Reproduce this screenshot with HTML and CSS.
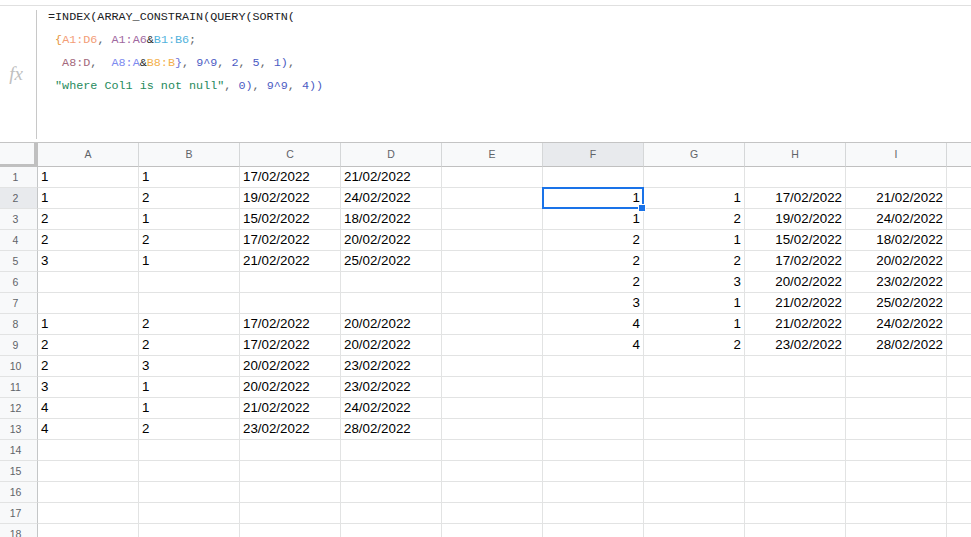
FILE: index.html
```html
<!DOCTYPE html>
<html lang="en">
<head>
    <meta charset="UTF-8">
    <title>Sheet</title>
    <link rel="stylesheet" href="styles.css">
</head>
<body>

    <div class="formula-bar">
        <div class="fx">fx</div>
        <div class="divider"></div>
        <div class="formula">
            <div class="line">=INDEX(ARRAY_CONSTRAIN(QUERY(SORTN(</div>
            <div class="line"> <span class="br1">{</span><span class="r1">A1:D6</span><span class="p">, </span><span class="r2">A1:A6</span>&amp;<span class="r3">B1:B6</span><span class="p">;</span></div>
            <div class="line">  <span class="r4">A8:D</span><span class="p">,  </span><span class="r5">A8:A</span>&amp;<span class="r6">B8:B</span><span class="br2">}</span><span class="p">, </span><span class="num">9^9</span><span class="p">, </span><span class="num">2</span><span class="p">, </span><span class="num">5</span><span class="p">, </span><span class="num">1)</span><span class="p">,</span></div>
            <div class="line"> <span class="str">"where Col1 is not null"</span><span class="p">, </span><span class="num">0)</span><span class="p">, </span><span class="num">9^9</span><span class="p">, </span><span class="num">4))</span></div>
        </div>
    </div>

    <div class="sheet">
        <div class="row head">
            <div class="corner"></div>
            <div class="ch">A</div><div class="ch">B</div><div class="ch">C</div><div class="ch">D</div><div class="ch">E</div>
            <div class="ch active">F</div><div class="ch">G</div><div class="ch">H</div><div class="ch">I</div><div class="ch"></div>
        </div>

        <div class="row">
            <div class="rh">1</div>
            <div class="c">1</div><div class="c">1</div><div class="c">17/02/2022</div><div class="c">21/02/2022</div><div class="c"></div>
            <div class="c"></div><div class="c"></div><div class="c"></div><div class="c"></div><div class="c"></div>
        </div>
        <div class="row">
            <div class="rh active">2</div>
            <div class="c">1</div><div class="c">2</div><div class="c">19/02/2022</div><div class="c">24/02/2022</div><div class="c"></div>
            <div class="c n sel">1<span class="handle"></span></div><div class="c n">1</div><div class="c n">17/02/2022</div><div class="c n">21/02/2022</div><div class="c"></div>
        </div>
        <div class="row">
            <div class="rh">3</div>
            <div class="c">2</div><div class="c">1</div><div class="c">15/02/2022</div><div class="c">18/02/2022</div><div class="c"></div>
            <div class="c n">1</div><div class="c n">2</div><div class="c n">19/02/2022</div><div class="c n">24/02/2022</div><div class="c"></div>
        </div>
        <div class="row">
            <div class="rh">4</div>
            <div class="c">2</div><div class="c">2</div><div class="c">17/02/2022</div><div class="c">20/02/2022</div><div class="c"></div>
            <div class="c n">2</div><div class="c n">1</div><div class="c n">15/02/2022</div><div class="c n">18/02/2022</div><div class="c"></div>
        </div>
        <div class="row">
            <div class="rh">5</div>
            <div class="c">3</div><div class="c">1</div><div class="c">21/02/2022</div><div class="c">25/02/2022</div><div class="c"></div>
            <div class="c n">2</div><div class="c n">2</div><div class="c n">17/02/2022</div><div class="c n">20/02/2022</div><div class="c"></div>
        </div>
        <div class="row">
            <div class="rh">6</div>
            <div class="c"></div><div class="c"></div><div class="c"></div><div class="c"></div><div class="c"></div>
            <div class="c n">2</div><div class="c n">3</div><div class="c n">20/02/2022</div><div class="c n">23/02/2022</div><div class="c"></div>
        </div>
        <div class="row">
            <div class="rh">7</div>
            <div class="c"></div><div class="c"></div><div class="c"></div><div class="c"></div><div class="c"></div>
            <div class="c n">3</div><div class="c n">1</div><div class="c n">21/02/2022</div><div class="c n">25/02/2022</div><div class="c"></div>
        </div>
        <div class="row">
            <div class="rh">8</div>
            <div class="c">1</div><div class="c">2</div><div class="c">17/02/2022</div><div class="c">20/02/2022</div><div class="c"></div>
            <div class="c n">4</div><div class="c n">1</div><div class="c n">21/02/2022</div><div class="c n">24/02/2022</div><div class="c"></div>
        </div>
        <div class="row">
            <div class="rh">9</div>
            <div class="c">2</div><div class="c">2</div><div class="c">17/02/2022</div><div class="c">20/02/2022</div><div class="c"></div>
            <div class="c n">4</div><div class="c n">2</div><div class="c n">23/02/2022</div><div class="c n">28/02/2022</div><div class="c"></div>
        </div>
        <div class="row">
            <div class="rh">10</div>
            <div class="c">2</div><div class="c">3</div><div class="c">20/02/2022</div><div class="c">23/02/2022</div><div class="c"></div>
            <div class="c"></div><div class="c"></div><div class="c"></div><div class="c"></div><div class="c"></div>
        </div>
        <div class="row">
            <div class="rh">11</div>
            <div class="c">3</div><div class="c">1</div><div class="c">20/02/2022</div><div class="c">23/02/2022</div><div class="c"></div>
            <div class="c"></div><div class="c"></div><div class="c"></div><div class="c"></div><div class="c"></div>
        </div>
        <div class="row">
            <div class="rh">12</div>
            <div class="c">4</div><div class="c">1</div><div class="c">21/02/2022</div><div class="c">24/02/2022</div><div class="c"></div>
            <div class="c"></div><div class="c"></div><div class="c"></div><div class="c"></div><div class="c"></div>
        </div>
        <div class="row">
            <div class="rh">13</div>
            <div class="c">4</div><div class="c">2</div><div class="c">23/02/2022</div><div class="c">28/02/2022</div><div class="c"></div>
            <div class="c"></div><div class="c"></div><div class="c"></div><div class="c"></div><div class="c"></div>
        </div>
        <div class="row">
            <div class="rh">14</div>
            <div class="c"></div><div class="c"></div><div class="c"></div><div class="c"></div><div class="c"></div>
            <div class="c"></div><div class="c"></div><div class="c"></div><div class="c"></div><div class="c"></div>
        </div>
        <div class="row">
            <div class="rh">15</div>
            <div class="c"></div><div class="c"></div><div class="c"></div><div class="c"></div><div class="c"></div>
            <div class="c"></div><div class="c"></div><div class="c"></div><div class="c"></div><div class="c"></div>
        </div>
        <div class="row">
            <div class="rh">16</div>
            <div class="c"></div><div class="c"></div><div class="c"></div><div class="c"></div><div class="c"></div>
            <div class="c"></div><div class="c"></div><div class="c"></div><div class="c"></div><div class="c"></div>
        </div>
        <div class="row">
            <div class="rh">17</div>
            <div class="c"></div><div class="c"></div><div class="c"></div><div class="c"></div><div class="c"></div>
            <div class="c"></div><div class="c"></div><div class="c"></div><div class="c"></div><div class="c"></div>
        </div>
        <div class="row">
            <div class="rh">18</div>
            <div class="c"></div><div class="c"></div><div class="c"></div><div class="c"></div><div class="c"></div>
            <div class="c"></div><div class="c"></div><div class="c"></div><div class="c"></div><div class="c"></div>
        </div>
    </div>

</body>
</html>
```

FILE: styles.css
```css
body {
    margin: 0;
    background: #fff;
    overflow: hidden;
    font-family: 'Liberation Sans', Arial, sans-serif;
}

/* formula bar */
.formula-bar {
    margin-top: 5px;
    height: 138px;
    box-sizing: border-box;
    border-top: 1px solid #e0e0e0;
    border-bottom: 1px solid #c4c4c4;
    display: flex;
}
.fx {
    width: 36px;
    display: flex;
    align-items: center;
    justify-content: center;
    padding-right: 4px;
    box-sizing: border-box;
    font-family: 'Liberation Serif', serif;
    font-style: italic;
    font-size: 19px;
    color: #c0c0c0;
}
.divider {
    width: 1px;
    margin: 4px 0 3px;
    background: #c8c8c8;
}
.formula {
    padding-left: 11px;
    font-family: 'Liberation Mono', 'DejaVu Sans Mono', monospace;
    font-size: 11.75px;
    color: #202124;
}
.line {
    height: 23px;
    line-height: 23px;
    white-space: pre;
}
.p { color: #5f6368; }
.br1 { color: #e5963c; }
.br2 { color: #6b72d8; }
.r1 { color: #f39d76; }
.r2 { color: #9f699f; }
.r3 { color: #52b2dc; }
.r4 { color: #a3687c; }
.r5 { color: #7d8bef; }
.r6 { color: #f3b04c; }
.num { color: #4b5bc3; }
.str { color: #268a5c; }

/* grid */
.row {
    display: grid;
    grid-template-columns: 38px repeat(10, 101px);
    height: 21px;
}
.row > div {
    box-sizing: border-box;
    border-right: 1px solid #e2e3e3;
    border-bottom: 1px solid #e2e3e3;
}
.row.head {
    height: 24px;
}
.corner {
    background: #f8f9fa;
    border-right: 4px solid #c0c0c0 !important;
    border-bottom: 3px solid #c0c0c0 !important;
}
.ch {
    background: #f8f9fa;
    border-bottom: 1px solid #c0c0c0 !important;
    border-right-color: #d5d7d8 !important;
    font-size: 10.5px;
    color: #5f6368;
    text-align: center;
    line-height: 23px;
}
.rh {
    background: #f8f9fa;
    border-right-color: #c4c6c7 !important;
    font-size: 10.5px;
    color: #5f6368;
    text-align: center;
    padding-right: 6px;
    line-height: 20px;
}
.ch.active, .rh.active {
    background: #e8eaed;
}
.c {
    font-size: 13.33px;
    color: #000;
    line-height: 20px;
    padding: 0 3px;
    white-space: nowrap;
}
.c.n {
    text-align: right;
}
.sel {
    position: relative;
}
.sel::after {
    content: '';
    position: absolute;
    top: -1px;
    left: -1px;
    right: -1px;
    bottom: -1px;
    border: 2px solid #1a73e8;
}
.handle {
    position: absolute;
    right: -3px;
    bottom: -4px;
    width: 6px;
    height: 6px;
    background: #1a73e8;
    border: 1px solid #fff;
    z-index: 2;
}
```
